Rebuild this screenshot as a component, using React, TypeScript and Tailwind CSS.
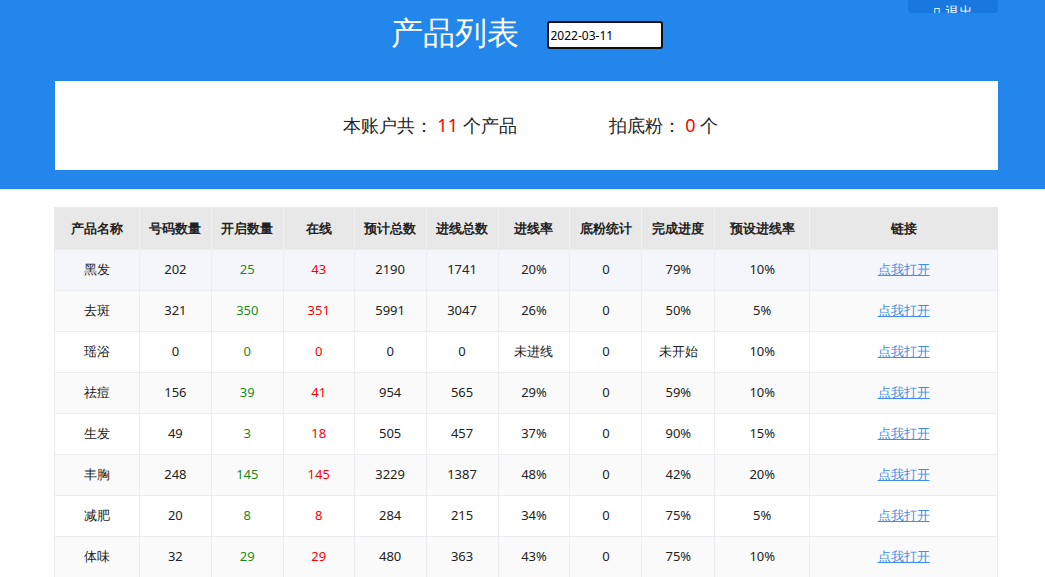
const rows = [
  ["黑发", "202", "25", "43", "2190", "1741", "20%", "0", "79%", "10%"],
  ["去斑", "321", "350", "351", "5991", "3047", "26%", "0", "50%", "5%"],
  ["瑶浴", "0", "0", "0", "0", "0", "未进线", "0", "未开始", "10%"],
  ["祛痘", "156", "39", "41", "954", "565", "29%", "0", "59%", "10%"],
  ["生发", "49", "3", "18", "505", "457", "37%", "0", "90%", "15%"],
  ["丰胸", "248", "145", "145", "3229", "1387", "48%", "0", "42%", "20%"],
  ["减肥", "20", "8", "8", "284", "215", "34%", "0", "75%", "5%"],
  ["体味", "32", "29", "29", "480", "363", "43%", "0", "75%", "10%"],
];
const heads = ["产品名称", "号码数量", "开启数量", "在线", "预计总数", "进线总数", "进线率", "底粉统计", "完成进度", "预设进线率", "链接"];
const widths = [85, 72, 72, 71, 72, 72, 72, 72, 73, 95, 187];

export default function App() {
  return (
    <div className="min-h-[577px] bg-white font-['Microsoft_YaHei','Noto_Sans_CJK_SC',sans-serif] text-[13px] text-[#222]">
      <div className="relative h-[189px] bg-[#2286ea] pt-[81px]">
        <div className="absolute right-[47px] top-0 flex h-[13px] w-[90px] items-end justify-center overflow-hidden rounded-b-sm bg-[#1878df] text-[14px] leading-none text-white">
          <span className="-mb-[6px]">▯ 退出</span>
        </div>
        <div className="absolute left-0 top-[8px] flex w-full justify-center">
          <div className="flex items-center">
            <span className="ml-[8px] text-[32px] text-white">产品列表</span>
            <input
              defaultValue="2022-03-11"
              className="ml-[28px] mt-[6px] h-[28px] w-[116px] rounded-[3px] border-2 border-[#111] bg-white px-[2px] font-['Liberation_Sans',sans-serif] text-[12px] text-black outline-none"
            />
          </div>
        </div>
        <div className="mx-[55px] flex h-[89px] w-[943px] items-center justify-center bg-white text-[18px]">
          <span className="ml-[8px]">本账户共： <span className="text-[#f00]">11</span> 个产品</span>
          <span className="ml-[92px]">拍底粉： <span className="text-[#f00]">0</span> 个</span>
        </div>
      </div>
      <div className="mx-[54px] mt-[18px] w-[944px] border border-[#e8eaf0]">
        <div className="flex h-[41px] bg-[#e8e8e8] font-bold">
          {heads.map((h, i) => (
            <div key={h} style={{ width: widths[i] }} className="flex items-center justify-center border-r border-[#f0f0f5] last:border-r-0">{h}</div>
          ))}
        </div>
        {rows.map((r, ri) => (
          <div key={r[0]} className={`flex h-[41px] border-t border-[#ebedf2] ${ri === 0 ? "bg-[#f4f6fa]" : ri % 2 === 1 ? "bg-[#fafafa]" : "bg-white"}`}>
            {[...r, "点我打开"].map((c, i) => (
              <div
                key={i}
                style={{ width: widths[i] }}
                className={`flex items-center justify-center border-r border-[#ebedf2] last:border-r-0 ${i === 2 ? "text-[#1a8a1a]" : i === 3 ? "text-[#f00]" : i === 10 ? "text-[#3f8ee8] underline" : ""}`}
              >
                {c}
              </div>
            ))}
          </div>
        ))}
      </div>
    </div>
  );
}
